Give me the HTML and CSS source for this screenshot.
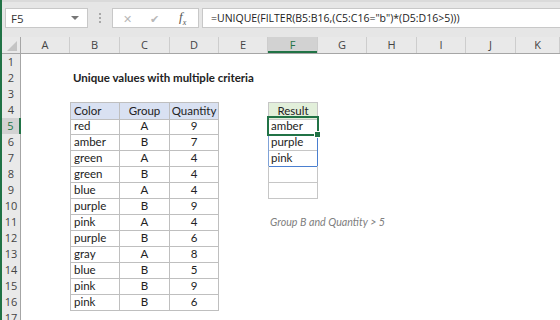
FILE: index.html
```html
<!DOCTYPE html>
<html lang="en">
<head>
  <meta charset="utf-8">
  <title>Unique values with multiple criteria</title>
  <link rel="stylesheet" href="styles.css">
</head>
<body>
  <div class="app">
    <div class="toolbar">
      <div class="namebox">
        <span>F5</span>
        <span class="caret"></span>
      </div>
      <div class="grip"><i></i><i></i><i></i></div>
      <div class="fnbox">
        <span class="icon-x">&#x2715;</span>
        <span class="icon-ok">&#x2714;</span>
        <span class="icon-fx">f<sub>x</sub></span>
      </div>
      <div class="formula">=UNIQUE(FILTER(B5:B16,(C5:C16="b")*(D5:D16&gt;5)))</div>
    </div>

    <div class="sheet">
      <div class="row colheads">
        <div class="corner"><span></span></div>
        <div class="ch">A</div>
        <div class="ch">B</div>
        <div class="ch">C</div>
        <div class="ch">D</div>
        <div class="ch">E</div>
        <div class="ch active">F</div>
        <div class="ch">G</div>
        <div class="ch">H</div>
        <div class="ch">I</div>
        <div class="ch">J</div>
        <div class="ch">K</div>
      </div>

      <div class="row"><div class="rh">1</div></div>
      <div class="row"><div class="rh">2</div><div></div><div class="title">Unique values with multiple criteria</div></div>
      <div class="row"><div class="rh">3</div></div>
      <div class="row">
        <div class="rh">4</div><div></div>
        <div class="t th first top">Color</div>
        <div class="t th top c">Group</div>
        <div class="t th top c">Quantity</div>
        <div></div>
        <div class="r rhead top">Result</div>
      </div>
      <div class="row">
        <div class="rh active">5</div><div></div>
        <div class="t first">red</div><div class="t c">A</div><div class="t c">9</div>
        <div></div><div class="r spill sel">amber</div>
      </div>
      <div class="row">
        <div class="rh">6</div><div></div>
        <div class="t first">amber</div><div class="t c">B</div><div class="t c">7</div>
        <div></div><div class="r spill">purple</div>
      </div>
      <div class="row">
        <div class="rh">7</div><div></div>
        <div class="t first">green</div><div class="t c">A</div><div class="t c">4</div>
        <div></div><div class="r spill last">pink</div>
      </div>
      <div class="row">
        <div class="rh">8</div><div></div>
        <div class="t first">green</div><div class="t c">B</div><div class="t c">4</div>
        <div></div><div class="r"></div>
      </div>
      <div class="row">
        <div class="rh">9</div><div></div>
        <div class="t first">blue</div><div class="t c">A</div><div class="t c">4</div>
        <div></div><div class="r"></div>
      </div>
      <div class="row">
        <div class="rh">10</div><div></div>
        <div class="t first">purple</div><div class="t c">B</div><div class="t c">9</div>
      </div>
      <div class="row">
        <div class="rh">11</div><div></div>
        <div class="t first">pink</div><div class="t c">A</div><div class="t c">4</div>
        <div></div><div class="note">Group B and Quantity &gt; 5</div>
      </div>
      <div class="row">
        <div class="rh">12</div><div></div>
        <div class="t first">purple</div><div class="t c">B</div><div class="t c">6</div>
      </div>
      <div class="row">
        <div class="rh">13</div><div></div>
        <div class="t first">gray</div><div class="t c">A</div><div class="t c">8</div>
      </div>
      <div class="row">
        <div class="rh">14</div><div></div>
        <div class="t first">blue</div><div class="t c">B</div><div class="t c">5</div>
      </div>
      <div class="row">
        <div class="rh">15</div><div></div>
        <div class="t first">pink</div><div class="t c">B</div><div class="t c">9</div>
      </div>
      <div class="row">
        <div class="rh">16</div><div></div>
        <div class="t first">pink</div><div class="t c">B</div><div class="t c">6</div>
      </div>
      <div class="row"><div class="rh">17</div></div>
    </div>
  </div>
</body>
</html>
```

FILE: styles.css
```css
body {
  margin: 0;
  width: 560px;
  height: 320px;
  overflow: hidden;
  background: #fff;
  font-family: Lato, 'Liberation Sans', sans-serif;
}

.app {
  height: 320px;
  border-left: 2px solid #217346;
  box-sizing: border-box;
  display: flex;
  flex-direction: column;
}

/* formula bar */
.toolbar {
  height: 37px;
  flex: none;
  box-sizing: border-box;
  padding-top: 6px;
  background: #e6e6e6;
  border-top: 2px solid #dadada;
  display: flex;
  align-items: flex-start;
  font-family: 'Open Sans', 'Noto Sans', sans-serif;
}

.namebox {
  width: 83px;
  height: 20px;
  margin-left: 3px;
  box-sizing: border-box;
  background: #fff;
  border: 1px solid #c8c8c8;
  display: flex;
  align-items: center;
  justify-content: space-between;
  padding: 0 8px 0 5px;
  font-size: 11.5px;
  color: #333;
}

.caret {
  width: 0;
  height: 0;
  border-left: 4px solid transparent;
  border-right: 4px solid transparent;
  border-top: 4px solid #777;
}

.grip {
  width: 24px;
  height: 20px;
  display: flex;
  flex-direction: column;
  align-items: center;
  justify-content: center;
  gap: 2px;
}

.grip i {
  width: 2px;
  height: 2px;
  background: #a8a8a8;
}

.fnbox {
  width: 87px;
  height: 20px;
  box-sizing: border-box;
  background: #fff;
  border: 1px solid #c8c8c8;
  display: flex;
  align-items: center;
  padding-left: 10px;
  gap: 18px;
  color: #b8b8b8;
  font-size: 12px;
}

.icon-x {
  font-size: 11px;
}

.icon-ok {
  font-size: 11px;
}

.icon-fx {
  color: #555;
  font-family: 'Liberation Serif', serif;
  font-style: italic;
  font-size: 13px;
  margin-left: 2px;
}

.icon-fx sub {
  font-size: 8px;
}

.formula {
  flex: 1;
  height: 20px;
  margin-left: 3px;
  box-sizing: border-box;
  background: #fff;
  border: 1px solid #c8c8c8;
  border-right: none;
  padding-left: 8px;
  font-size: 10.5px;
  line-height: 18px;
  color: #222;
  white-space: nowrap;
}

/* grid */
.sheet {
  flex: 1;
  overflow: hidden;
}

.row {
  display: grid;
  grid-template-columns: 19px 49px 50px 50px 49px 49px 50px 49px 50px 49px 50px 1fr;
  height: 16px;
  font-size: 11.5px;
  line-height: 16px;
  color: #222;
}

.colheads {
  background: #e9e9e9;
  border-bottom: 1px solid #a6a6a6;
  font-family: 'Open Sans', 'Noto Sans', sans-serif;
  font-size: 11px;
  color: #444;
}

.corner {
  border-right: 1px solid #a6a6a6;
  position: relative;
}

.corner span {
  position: absolute;
  right: 3px;
  bottom: 2px;
  width: 0;
  height: 0;
  border-left: 10px solid transparent;
  border-bottom: 10px solid #c4c4c4;
}

.ch {
  text-align: center;
  border-right: 1px solid #cdcdcd;
}

.ch.active {
  background: #d2d2d2;
  color: #217346;
  box-shadow: inset 0 -2px 0 #217346;
}

.rh {
  background: #e9e9e9;
  border-right: 1px solid #a6a6a6;
  border-bottom: 1px solid #cdcdcd;
  box-sizing: border-box;
  text-align: center;
  font-family: 'Open Sans', 'Noto Sans', sans-serif;
  font-size: 11px;
  color: #444;
}

.rh.active {
  background: #d2d2d2;
  color: #217346;
  border-right: 2px solid #217346;
}

.title {
  grid-column: span 4;
  font-weight: bold;
  padding-left: 3px;
  white-space: nowrap;
}

.t {
  border-right: 1px solid #bfbfbf;
  border-bottom: 1px solid #bfbfbf;
  box-sizing: border-box;
  padding-left: 3px;
  white-space: nowrap;
}

.t.first {
  border-left: 1px solid #bfbfbf;
}

.top {
  border-top: 1px solid #bfbfbf;
}

.th {
  background: #d9e1f2;
}

.c {
  text-align: center;
  padding-left: 0;
}

.r {
  border: 1px solid #c6c6c6;
  border-top: none;
  box-sizing: border-box;
  padding-left: 2px;
}

.rhead {
  border-top: 1px solid #c6c6c6;
  background: #e2efda;
  text-align: center;
  padding-left: 0;
}

.r.spill {
  border-left-color: #7fa2d8;
  border-right-color: #4a7fd0;
}

.r.spill.last {
  border-bottom-color: #4a7fd0;
}

.r.sel {
  position: relative;
}

.r.sel::before {
  content: '';
  position: absolute;
  left: -2px;
  top: -2px;
  right: -2px;
  bottom: -2px;
  border: 2px solid #217346;
}

.r.sel::after {
  content: '';
  position: absolute;
  right: -4px;
  bottom: -4px;
  width: 5px;
  height: 5px;
  background: #217346;
  border: 1px solid #fff;
}

.note {
  grid-column: span 4;
  padding-left: 2px;
  font-style: italic;
  font-size: 10.7px;
  color: #808080;
  white-space: nowrap;
}
```
